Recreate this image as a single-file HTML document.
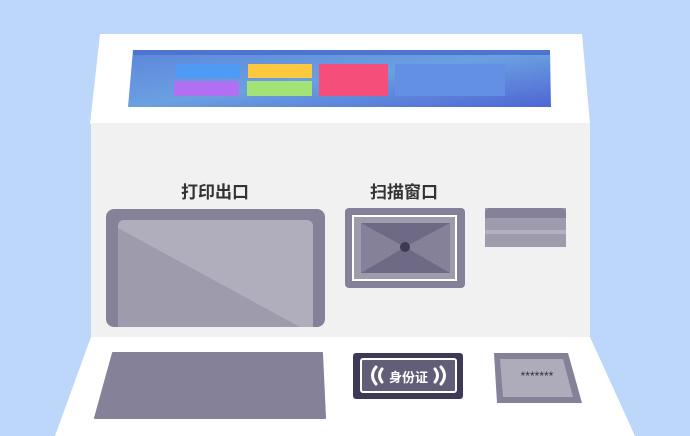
<!DOCTYPE html>
<html><head><meta charset="utf-8"><style>
*{margin:0;padding:0;box-sizing:border-box}
body{width:690px;height:436px;overflow:hidden;background:#bcd7fa;position:relative;font-family:"Liberation Sans","Noto Sans CJK SC",sans-serif}
.a{position:absolute}
.lbl{font-size:17px;font-weight:bold;color:#333;width:120px;text-align:center}
</style></head><body>
<svg class="a" style="left:0;top:0" width="690" height="436">
<defs><linearGradient id="sg" x1="0" y1="0" x2="1" y2="1"><stop offset="0" stop-color="#5d86dc"/><stop offset="0.5" stop-color="#6aa0e0"/><stop offset="1" stop-color="#4f66d4"/></linearGradient></defs>
<polygon points="100,34 582,34 590,124 90,124" fill="#fff"/>
<rect x="91" y="123" width="499" height="214" fill="#f1f1f1"/>
<polygon points="91,337 590,337 635,436 55,436" fill="#fff"/>
<polygon points="133,50 550,50 551,107 128,107" fill="url(#sg)"/>
<rect x="133" y="50" width="417" height="5" fill="#4d74cf"/>
<rect x="176" y="64" width="64" height="14" fill="#4f9af5"/>
<rect x="174" y="81" width="65" height="15" fill="#b170f2"/>
<rect x="248" y="64" width="64" height="14" fill="#fbc83e"/>
<rect x="247" y="81" width="65" height="15" fill="#a3e274"/>
<rect x="319" y="64" width="69" height="32" fill="#f64e7a"/>
<rect x="395" y="64" width="110" height="32" fill="#6390e4"/>
<rect x="106" y="209" width="219" height="118" rx="8" fill="#858199"/>
<path d="M124,220 H307 a6,6 0 0 1 6,6 V327 H118 V226 a6,6 0 0 1 6,-6z" fill="#b0aebd"/>
<polygon points="118,228 300,327 118,327" fill="#9e9cac"/>
<rect x="345" y="208" width="120" height="80" rx="4" fill="#858199"/>
<rect x="352" y="215" width="105" height="66" fill="#fff"/>
<rect x="354" y="217" width="101" height="62" fill="#9e9cac"/>
<rect x="361" y="223" width="89" height="50" fill="#858199"/>
<polygon points="361,223 450,223 405,247" fill="#6e6a85"/>
<polygon points="361,273 450,273 405,247" fill="#6e6a85"/>
<circle cx="405" cy="247" r="5" fill="#3e3a55"/>
<rect x="485" y="208" width="81" height="39" fill="#9e9cac"/>
<path d="M490,208 H561 a5,5 0 0 1 5,5 V218 H485 V213 a5,5 0 0 1 5,-5z" fill="#858199"/>
<rect x="485" y="230" width="81" height="4" fill="#b3b1bf"/>
<polygon points="113,353 322,353 325,418 95,418" fill="#858199" stroke="#858199" stroke-width="2" stroke-linejoin="round"/>
<rect x="353" y="353" width="110" height="46" rx="3" fill="#3e3a55"/>
<rect x="361" y="359" width="95" height="33" rx="2" fill="#625e78" stroke="#fff" stroke-width="2"/>
<path d="M376,367 Q369,375.5 376,384" stroke="#fff" stroke-width="3" fill="none" stroke-linecap="round"/>
<path d="M382,369 Q377,375.5 382,382" stroke="#fff" stroke-width="3" fill="none" stroke-linecap="round"/>
<path d="M441,367 Q448,375.5 441,384" stroke="#fff" stroke-width="3" fill="none" stroke-linecap="round"/>
<path d="M435,369 Q440,375.5 435,382" stroke="#fff" stroke-width="3" fill="none" stroke-linecap="round"/>
<polygon points="494,353 568,353 582,403 497,403" fill="#858199"/>
<polygon points="500,359 563,359 573,397 503,397" fill="#aeacbb"/>
</svg>
<div class="a lbl" style="left:155px;top:178px">打印出口</div>
<div class="a lbl" style="left:344px;top:178px">扫描窗口</div>
<div class="a" style="left:380px;top:367px;width:57px;text-align:center;color:#fff;font-size:13px;font-weight:bold">身份证</div>
<div class="a" style="left:502px;top:369px;width:70px;text-align:center;color:#333;font-size:12px">*******</div>
</body></html>
